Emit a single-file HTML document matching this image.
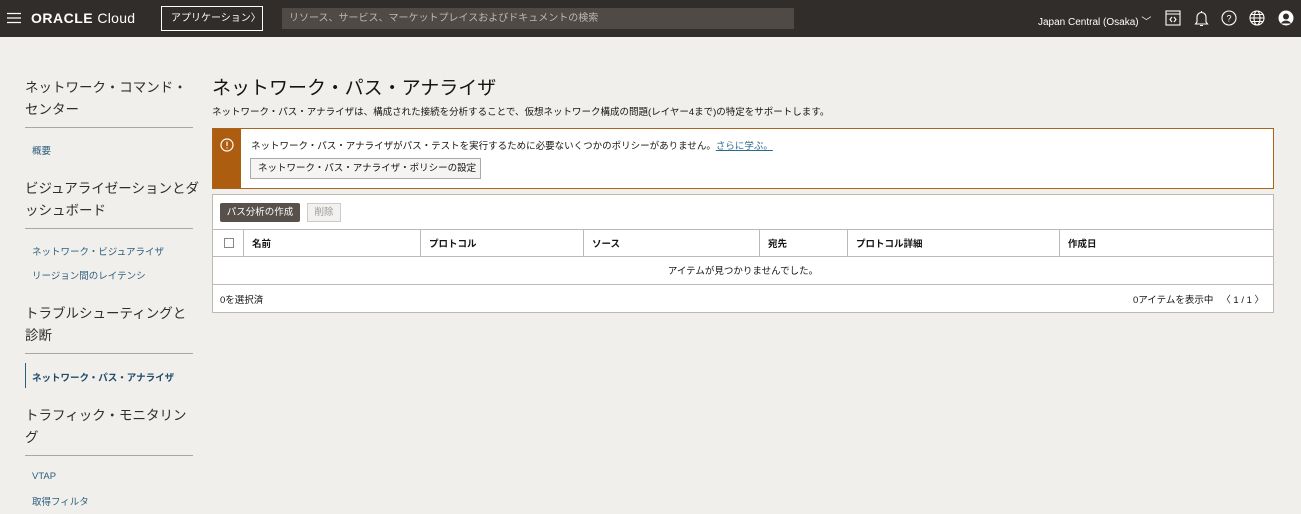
<!DOCTYPE html>
<html><head><meta charset="utf-8"><style>
*{box-sizing:border-box;margin:0;padding:0}
body{width:1301px;height:514px;overflow:hidden;background:#f1efec;font-family:"Liberation Sans","Noto Sans CJK JP",sans-serif;color:#161513;position:relative}
.hdr{position:absolute;left:0;top:0;width:1301px;height:37px;background:#312d2a;color:#fff}
.a{position:absolute}
.side .h{position:absolute;left:25px;font-size:13.5px;line-height:22px;color:#312d2a;white-space:nowrap}
.side .ln{position:absolute;left:25px;width:168px;border-top:1px solid #aaa7a3}
.side .l{position:absolute;left:32px;font-size:9.5px;color:#2c5f7c}
</style></head><body>
<div class="hdr">
 <svg class="a" style="left:7px;top:12px" width="14" height="12"><path d="M0 1.5H14M0 6H14M0 10.5H14" stroke="#fff" stroke-width="1.3"/></svg>
 <div class="a" style="left:31px;top:10px;font-size:14px;letter-spacing:0.3px"><b style="letter-spacing:0.5px">ORACLE</b> Cloud</div>
 <div class="a" style="left:161px;top:6px;width:102px;height:25px;border:1px solid #fff;font-size:10px;line-height:23px;padding-left:9px">アプリケーション〉</div>
 <div class="a" style="left:282px;top:8px;width:512px;height:21px;background:#4f4a46;font-size:10px;line-height:21px;padding-left:7px;color:#bdb8b3">リソース、サービス、マーケットプレイスおよびドキュメントの検索</div>
 <div class="a" style="left:1038px;top:13px;font-size:10px">Japan Central (Osaka) ﹀</div>
 <svg class="a" style="left:1165px;top:10px" width="16" height="16" fill="none" stroke="#fff" stroke-width="1.1"><rect x="1" y="1" width="14" height="14"/><path d="M1 4H15M7 7L5 9.5L7 12M9 7L11 9.5L9 12"/></svg>
 <svg class="a" style="left:1194px;top:10px" width="15" height="17" fill="none" stroke="#fff" stroke-width="1.1"><path d="M7.5 1V2.5M3 12V7A4.5 4.5 0 0 1 12 7V12L13.5 14H1.5Z M6 15.5H9"/></svg>
 <svg class="a" style="left:1221px;top:10px" width="16" height="16" fill="none" stroke="#fff" stroke-width="1.1"><circle cx="8" cy="8" r="7"/><text x="8" y="11.5" font-size="9" fill="#fff" stroke="none" text-anchor="middle" font-family="Liberation Sans">?</text></svg>
 <svg class="a" style="left:1249px;top:10px" width="16" height="16" fill="none" stroke="#fff" stroke-width="1.1"><circle cx="8" cy="8" r="7"/><ellipse cx="8" cy="8" rx="3" ry="7"/><path d="M1 8H15M2 4.5H14M2 11.5H14"/></svg>
 <svg class="a" style="left:1278px;top:10px" width="16" height="16"><circle cx="8" cy="8" r="7.5" fill="#fff"/><circle cx="8" cy="6.5" r="3" fill="#312d2a"/><path d="M3 13.5A5.5 5 0 0 1 13 13.5" fill="#312d2a"/></svg>
</div>
<div class="side">
 <div class="h" style="top:77px">ネットワーク・コマンド・<br>センター</div>
 <div class="ln" style="top:127px"></div>
 <div class="l" style="top:143px">概要</div>
 <div class="h" style="top:178px">ビジュアライゼーションとダ<br>ッシュボード</div>
 <div class="ln" style="top:228px"></div>
 <div class="l" style="top:244px">ネットワーク・ビジュアライザ</div>
 <div class="l" style="top:268px">リージョン間のレイテンシ</div>
 <div class="h" style="top:303px">トラブルシューティングと<br>診断</div>
 <div class="ln" style="top:353px"></div>
 <div class="a" style="left:25px;top:363px;height:25px;border-left:1.5px solid #2c5f7c"></div>
 <div class="l" style="top:370px;font-weight:bold;color:#1f4c66">ネットワーク・パス・アナライザ</div>
 <div class="h" style="top:405px">トラフィック・モニタリン<br>グ</div>
 <div class="ln" style="top:455px"></div>
 <div class="l" style="top:471px">VTAP</div>
 <div class="l" style="top:494px">取得フィルタ</div>
</div>
<div class="a" style="left:212px;top:73px;font-size:19px;color:#161513">ネットワーク・パス・アナライザ</div>
<div class="a" style="left:212px;top:104px;font-size:9.5px">ネットワーク・パス・アナライザは、構成された接続を分析することで、仮想ネットワーク構成の問題(レイヤー4まで)の特定をサポートします。</div>
<div class="a" style="left:212px;top:128px;width:1062px;height:61px;background:#fff;border:1px solid #a8641c">
 <div class="a" style="left:0;top:0;width:28px;height:59px;background:#ac5d10"></div>
 <svg class="a" style="left:7px;top:9px" width="14" height="14" fill="none" stroke="#fff" stroke-width="1.2"><circle cx="7" cy="7" r="6"/><path d="M7 3.5V8M7 9.5V10.5"/></svg>
 <div class="a" style="left:38px;top:9px;font-size:9.5px">ネットワーク・パス・アナライザがパス・テストを実行するために必要ないくつかのポリシーがありません。<span style="color:#2c6a8c;text-decoration:underline">さらに学ぶ。</span></div>
 <div class="a" style="left:37px;top:29px;height:21px;width:231px;border:1px solid #aaa;background:#f5f4f2;font-size:9.5px;line-height:19px;padding-left:7px">ネットワーク・パス・アナライザ・ポリシーの設定</div>
</div>
<div class="a" style="left:212px;top:194px;width:1062px;height:119px;background:#fff;border:1px solid #bdb9b5">
 <div class="a" style="left:7px;top:8px;width:80px;height:19px;background:#57504b;color:#fff;font-size:9.5px;line-height:19px;text-align:center;border-radius:2px">パス分析の作成</div>
 <div class="a" style="left:94px;top:8px;width:34px;height:19px;background:#f2f1ef;border:1px solid #ccc;color:#999;font-size:9.5px;line-height:17px;text-align:center">削除</div>
 <div class="a" style="left:0;top:34px;width:1060px;height:28px;border-top:1px solid #bdb9b5;border-bottom:1px solid #bdb9b5;font-size:9.5px;font-weight:bold">
  <div class="a" style="left:11px;top:8px;width:10px;height:10px;border:1px solid #888;background:#fff"></div>
  <div class="a" style="left:30px;top:0;height:26px;border-left:1px solid #bdb9b5"></div>
  <div class="a" style="left:39px;top:6px">名前</div>
  <div class="a" style="left:207px;top:0;height:26px;border-left:1px solid #bdb9b5"></div>
  <div class="a" style="left:216px;top:6px">プロトコル</div>
  <div class="a" style="left:370px;top:0;height:26px;border-left:1px solid #bdb9b5"></div>
  <div class="a" style="left:379px;top:6px">ソース</div>
  <div class="a" style="left:546px;top:0;height:26px;border-left:1px solid #bdb9b5"></div>
  <div class="a" style="left:555px;top:6px">宛先</div>
  <div class="a" style="left:634px;top:0;height:26px;border-left:1px solid #bdb9b5"></div>
  <div class="a" style="left:643px;top:6px">プロトコル詳細</div>
  <div class="a" style="left:846px;top:0;height:26px;border-left:1px solid #bdb9b5"></div>
  <div class="a" style="left:855px;top:6px">作成日</div>
 </div>
 <div class="a" style="left:0;top:68px;width:1060px;text-align:center;font-size:9.5px">アイテムが見つかりませんでした。</div>
 <div class="a" style="left:0;top:89px;width:1060px;border-top:1px solid #bdb9b5"></div>
 <div class="a" style="left:7px;top:97px;font-size:9.5px">0を選択済</div>
 <div class="a" style="left:920px;top:97px;font-size:9.5px">0アイテムを表示中 &nbsp;&nbsp;〈 1 / 1 〉</div>
</div>
</body></html>
